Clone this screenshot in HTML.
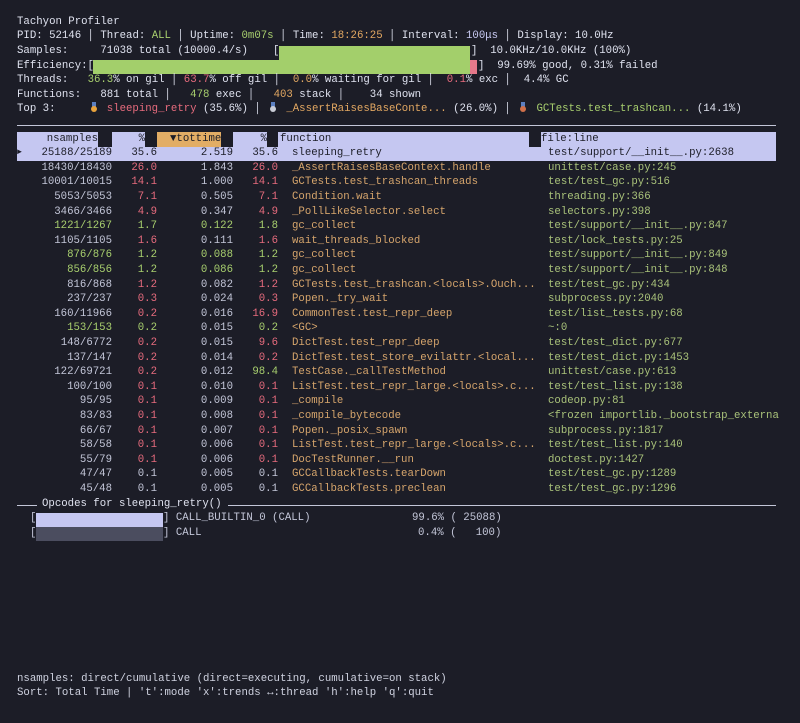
<!DOCTYPE html>
<html><head><meta charset="utf-8"><style>
*{margin:0;padding:0;box-sizing:border-box}
html,body{width:800px;height:723px;overflow:hidden;background:#1c1d27}
body{position:relative;font-family:"Liberation Mono","DejaVu Sans Mono",monospace;font-size:10.7px;color:#c3c6d8}
.l{position:absolute;left:17px;height:14.6px;line-height:14.6px;white-space:pre}
.r{position:absolute;left:0;width:800px;height:14.6px;line-height:14.6px;white-space:pre}
.r span{position:absolute;top:0}
.a{left:30px;width:82px;text-align:right}
.p{left:118px;width:39px;text-align:right}
.t{left:180px;width:53px;text-align:right}
.q{left:238px;width:40px;text-align:right}
.f{left:292px;color:#d6a56c}
.fl{left:548px;color:#a9c27a}
.g{color:#a8cf6e}.rd{color:#e66b7d}.o{color:#e3a862}.lv{color:#c8c9f2}
.w{color:#dfe2ef}
.bx{position:absolute}
.sel{background:#c5c7f1;color:#1c1d27}
.sel .f,.sel .fl{color:#1c1d27}
.m{display:inline-block;width:12.8px;height:10px;position:relative;vertical-align:-1px}
.m i{position:absolute;left:3px;top:4px;width:6px;height:6px;border-radius:50%}
.m b{position:absolute;left:4px;top:0;width:4px;height:5px;background:#8a8fb0}
</style></head><body>
<div class="l w" style="top:14.7px">Tachyon Profiler</div>
<div class="l w" style="top:29.3px">PID: 52146 │ Thread: <span class="g">ALL</span> │ Uptime: <span class="g">0m07s</span> │ Time: <span class="o">18:26:25</span> │ Interval: <span class="lv">100μs</span> │ Display: 10.0Hz</div>
<div class="l w" style="top:43.9px">Samples:     71038 total (10000.4/s)</div>
<div class="l w" style="top:43.9px;left:273px">[</div>
<div class="bx" style="left:279px;top:46px;width:191px;height:14px;background:#a3cf6b"></div>
<div class="l w" style="top:43.9px;left:471px">]  10.0KHz/10.0KHz (100%)</div>
<div class="l w" style="top:58.5px">Efficiency:[</div>
<div class="bx" style="left:93px;top:60px;width:377px;height:14px;background:#a3cf6b"></div>
<div class="bx" style="left:470px;top:60px;width:7px;height:14px;background:#e5788a"></div>
<div class="l w" style="top:58.5px;left:478px">]  99.69% good, 0.31% failed</div>
<div class="l w" style="top:73.1px">Threads:   <span class="g">36.3</span>% on gil │ <span class="rd">63.7</span>% off gil │  <span class="o">0.0</span>% waiting for gil │  <span class="rd">0.1</span>% exc │  4.4% GC</div>
<div class="l w" style="top:87.7px">Functions:   881 total │   <span class="g">478</span> exec │   <span class="o">403</span> stack │    34 shown</div>
<div class="l w" style="top:102.3px">Top 3:     <span class="m"><b style="background:#5b7fc0"></b><i style="background:#e9a33c"></i></span> <span class="rd">sleeping_retry</span> (35.6%) │ <span class="m"><b style="background:#5b7fc0"></b><i style="background:#c9ccd6"></i></span> <span class="o">_AssertRaisesBaseConte...</span> (26.0%) │ <span class="m"><b style="background:#5b7fc0"></b><i style="background:#d0704a"></i></span> <span class="g">GCTests.test_trashcan...</span> (14.1%)</div>
<div class="bx" style="left:17px;top:125px;width:759px;height:1px;background:#c3c6d8"></div>

<!-- header -->
<div class="bx" style="left:17px;top:132px;width:759px;height:14.6px;background:#c5c7f1"></div>
<div class="bx" style="left:98px;top:132px;width:14px;height:14.6px;background:#1c1d27"></div>
<div class="bx" style="left:145px;top:132px;width:12px;height:14.6px;background:#1c1d27"></div>
<div class="bx" style="left:157px;top:132px;width:64px;height:14.6px;background:#e2ad65"></div>
<div class="bx" style="left:221px;top:132px;width:12px;height:14.6px;background:#1c1d27"></div>
<div class="bx" style="left:267px;top:132px;width:11px;height:14.6px;background:#1c1d27"></div>
<div class="bx" style="left:529px;top:132px;width:12px;height:14.6px;background:#1c1d27"></div>
<div class="r" style="top:131.5px;color:#1c1d27">
<span style="left:30px;width:68px;text-align:right">nsamples</span><span style="left:120px;width:25px;text-align:right">%</span><span style="left:170px">▼tottime</span><span style="left:240px;width:27px;text-align:right">%</span><span style="left:280px">function</span><span style="left:541px">file:line</span></div>

<div class="bx sel" style="left:17px;top:146.5px;width:759px;height:14px"></div>
<div class="r sel" style="top:146.1px;background:none"><span style="left:17px;font-size:8px">►</span><span class="a">25188/25189</span><span class="p">35.6</span><span class="t">2.519</span><span class="q">35.6</span><span class="f">sleeping_retry</span><span class="fl">test/support/__init__.py:2638</span></div>
<div class="r" style="top:160.7px"><span class="a">18430/18430</span><span class="p rd">26.0</span><span class="t">1.843</span><span class="q rd">26.0</span><span class="f">_AssertRaisesBaseContext.handle</span><span class="fl">unittest/case.py:245</span></div>
<div class="r" style="top:175.3px"><span class="a">10001/10015</span><span class="p rd">14.1</span><span class="t">1.000</span><span class="q rd">14.1</span><span class="f">GCTests.test_trashcan_threads</span><span class="fl">test/test_gc.py:516</span></div>
<div class="r" style="top:189.9px"><span class="a">5053/5053</span><span class="p rd">7.1</span><span class="t">0.505</span><span class="q rd">7.1</span><span class="f">Condition.wait</span><span class="fl">threading.py:366</span></div>
<div class="r" style="top:204.5px"><span class="a">3466/3466</span><span class="p rd">4.9</span><span class="t">0.347</span><span class="q rd">4.9</span><span class="f">_PollLikeSelector.select</span><span class="fl">selectors.py:398</span></div>
<div class="r" style="top:219.1px"><span class="a g">1221/1267</span><span class="p g">1.7</span><span class="t g">0.122</span><span class="q g">1.8</span><span class="f">gc_collect</span><span class="fl">test/support/__init__.py:847</span></div>
<div class="r" style="top:233.7px"><span class="a">1105/1105</span><span class="p rd">1.6</span><span class="t">0.111</span><span class="q rd">1.6</span><span class="f">wait_threads_blocked</span><span class="fl">test/lock_tests.py:25</span></div>
<div class="r" style="top:248.3px"><span class="a g">876/876</span><span class="p g">1.2</span><span class="t g">0.088</span><span class="q g">1.2</span><span class="f">gc_collect</span><span class="fl">test/support/__init__.py:849</span></div>
<div class="r" style="top:262.9px"><span class="a g">856/856</span><span class="p g">1.2</span><span class="t g">0.086</span><span class="q g">1.2</span><span class="f">gc_collect</span><span class="fl">test/support/__init__.py:848</span></div>
<div class="r" style="top:277.5px"><span class="a">816/868</span><span class="p rd">1.2</span><span class="t">0.082</span><span class="q rd">1.2</span><span class="f">GCTests.test_trashcan.&lt;locals&gt;.Ouch...</span><span class="fl">test/test_gc.py:434</span></div>
<div class="r" style="top:292.1px"><span class="a">237/237</span><span class="p rd">0.3</span><span class="t">0.024</span><span class="q rd">0.3</span><span class="f">Popen._try_wait</span><span class="fl">subprocess.py:2040</span></div>
<div class="r" style="top:306.7px"><span class="a">160/11966</span><span class="p rd">0.2</span><span class="t">0.016</span><span class="q rd">16.9</span><span class="f">CommonTest.test_repr_deep</span><span class="fl">test/list_tests.py:68</span></div>
<div class="r" style="top:321.3px"><span class="a g">153/153</span><span class="p g">0.2</span><span class="t">0.015</span><span class="q g">0.2</span><span class="f">&lt;GC&gt;</span><span class="fl">~:0</span></div>
<div class="r" style="top:335.9px"><span class="a">148/6772</span><span class="p rd">0.2</span><span class="t">0.015</span><span class="q rd">9.6</span><span class="f">DictTest.test_repr_deep</span><span class="fl">test/test_dict.py:677</span></div>
<div class="r" style="top:350.5px"><span class="a">137/147</span><span class="p rd">0.2</span><span class="t">0.014</span><span class="q rd">0.2</span><span class="f">DictTest.test_store_evilattr.&lt;local...</span><span class="fl">test/test_dict.py:1453</span></div>
<div class="r" style="top:365.1px"><span class="a">122/69721</span><span class="p rd">0.2</span><span class="t">0.012</span><span class="q g">98.4</span><span class="f">TestCase._callTestMethod</span><span class="fl">unittest/case.py:613</span></div>
<div class="r" style="top:379.7px"><span class="a">100/100</span><span class="p rd">0.1</span><span class="t">0.010</span><span class="q rd">0.1</span><span class="f">ListTest.test_repr_large.&lt;locals&gt;.c...</span><span class="fl">test/test_list.py:138</span></div>
<div class="r" style="top:394.3px"><span class="a">95/95</span><span class="p rd">0.1</span><span class="t">0.009</span><span class="q rd">0.1</span><span class="f">_compile</span><span class="fl">codeop.py:81</span></div>
<div class="r" style="top:408.9px"><span class="a">83/83</span><span class="p rd">0.1</span><span class="t">0.008</span><span class="q rd">0.1</span><span class="f">_compile_bytecode</span><span class="fl">&lt;frozen importlib._bootstrap_externa</span></div>
<div class="r" style="top:423.5px"><span class="a">66/67</span><span class="p rd">0.1</span><span class="t">0.007</span><span class="q rd">0.1</span><span class="f">Popen._posix_spawn</span><span class="fl">subprocess.py:1817</span></div>
<div class="r" style="top:438.1px"><span class="a">58/58</span><span class="p rd">0.1</span><span class="t">0.006</span><span class="q rd">0.1</span><span class="f">ListTest.test_repr_large.&lt;locals&gt;.c...</span><span class="fl">test/test_list.py:140</span></div>
<div class="r" style="top:452.7px"><span class="a">55/79</span><span class="p rd">0.1</span><span class="t">0.006</span><span class="q rd">0.1</span><span class="f">DocTestRunner.__run</span><span class="fl">doctest.py:1427</span></div>
<div class="r" style="top:467.3px"><span class="a">47/47</span><span class="p">0.1</span><span class="t">0.005</span><span class="q">0.1</span><span class="f">GCCallbackTests.tearDown</span><span class="fl">test/test_gc.py:1289</span></div>
<div class="r" style="top:481.9px"><span class="a">45/48</span><span class="p">0.1</span><span class="t">0.005</span><span class="q">0.1</span><span class="f">GCCallbackTests.preclean</span><span class="fl">test/test_gc.py:1296</span></div>

<!-- opcodes -->
<div class="bx" style="left:17px;top:505px;width:20px;height:1px;background:#c3c6d8"></div>
<div class="l w" style="top:496.5px;left:42px">Opcodes for sleeping_retry()</div>
<div class="bx" style="left:228px;top:505px;width:548px;height:1px;background:#c3c6d8"></div>
<div class="l" style="top:511.1px;left:30px">[</div>
<div class="bx" style="left:36px;top:513px;width:127px;height:14px;background:#c5c7f1"></div>
<div class="l" style="top:511.1px;left:163px">] CALL_BUILTIN_0 (CALL)</div>
<div class="l" style="top:511.1px;left:412px">99.6% ( 25088)</div>
<div class="l" style="top:525.7px;left:30px">[</div>
<div class="bx" style="left:36px;top:527px;width:127px;height:14px;background:#4b4d5f"></div>
<div class="l" style="top:525.7px;left:163px">] CALL</div>
<div class="l" style="top:525.7px;left:418px">0.4% (   100)</div>

<div class="l" style="top:671.7px;color:#cfd2e0">nsamples: direct/cumulative (direct=executing, cumulative=on stack)</div>
<div class="l" style="top:686.3px;color:#cfd2e0">Sort: Total Time | 't':mode 'x':trends ↔:thread 'h':help 'q':quit</div>
</body></html>
